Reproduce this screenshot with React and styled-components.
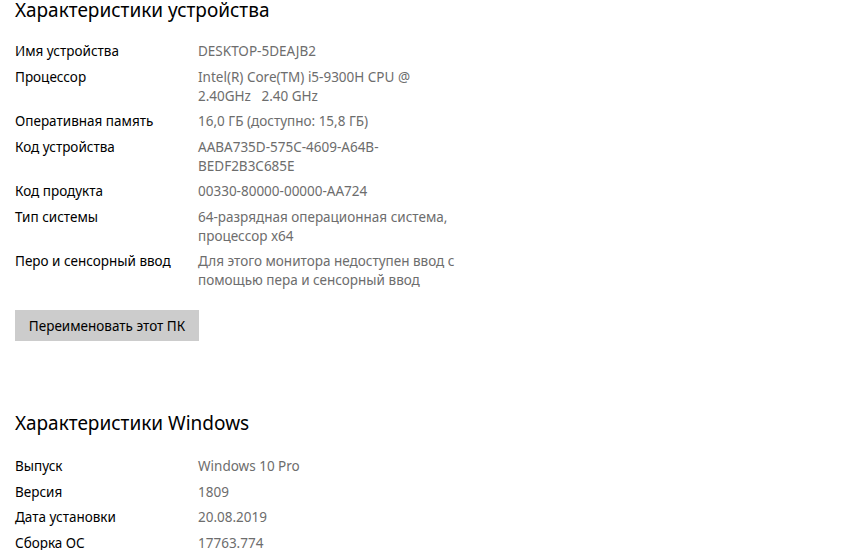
import React from "react";
import styled, { createGlobalStyle } from "styled-components";

const GlobalStyle = createGlobalStyle`
  html, body {
    margin: 0;
    padding: 0;
    background: #fff;
  }
  body {
    font-family: "Noto Sans", "Open Sans", sans-serif;
    color: #000;
  }
`;

const Page = styled.div`
  width: 850px;
  height: 550px;
  overflow: hidden;
  padding: 0 15px;
  box-sizing: border-box;
  background: #fff;
`;

const Section = styled.section`
  display: flex;
  flex-direction: column;
  margin-top: ${(p) => p.top || 0}px;
`;

const Heading = styled.h2`
  margin: 0;
  font-size: 19px;
  font-weight: 400;
  line-height: 26px;
  color: #000;
`;

const Specs = styled.div`
  display: grid;
  grid-template-columns: 183px 1fr;
  row-gap: 6.5px;
  margin-top: ${(p) => p.gap || 20}px;
  font-size: 13.5px;
  line-height: 19px;
`;

const Label = styled.div`
  color: #000;
`;

const Value = styled.div`
  color: #6d6d6d;
  white-space: pre-wrap;
`;

const Button = styled.button`
  align-self: flex-start;
  margin-top: 20px;
  width: 184px;
  height: 31px;
  border: none;
  background: #cccccc;
  font-family: inherit;
  font-size: 13.5px;
  color: #000;
  padding: 0;
  text-align: center;
`;

const device = [
  ["Имя устройства", "DESKTOP-5DEAJB2"],
  ["Процессор", "Intel(R) Core(TM) i5-9300H CPU @\n2.40GHz   2.40 GHz"],
  ["Оперативная память", "16,0 ГБ (доступно: 15,8 ГБ)"],
  ["Код устройства", "AABA735D-575C-4609-A64B-\nBEDF2B3C685E"],
  ["Код продукта", "00330-80000-00000-AA724"],
  ["Тип системы", "64-разрядная операционная система,\nпроцессор x64"],
  ["Перо и сенсорный ввод", "Для этого монитора недоступен ввод с\nпомощью пера и сенсорный ввод"],
];

const windows = [
  ["Выпуск", "Windows 10 Pro"],
  ["Версия", "1809"],
  ["Дата установки", "20.08.2019"],
  ["Сборка ОС", "17763.774"],
];

function SpecList({ rows, gap }) {
  return (
    <Specs gap={gap}>
      {rows.map(([label, value]) => (
        <React.Fragment key={label}>
          <Label>{label}</Label>
          <Value>{value}</Value>
        </React.Fragment>
      ))}
    </Specs>
  );
}

export default function App() {
  return (
    <Page>
      <GlobalStyle />
      <Section top={-3}>
        <Heading>Характеристики устройства</Heading>
        <SpecList rows={device} gap={19} />
        <Button>Переименовать этот ПК</Button>
      </Section>
      <Section top={69}>
        <Heading>Характеристики Windows</Heading>
        <SpecList rows={windows} gap={21} />
      </Section>
    </Page>
  );
}
